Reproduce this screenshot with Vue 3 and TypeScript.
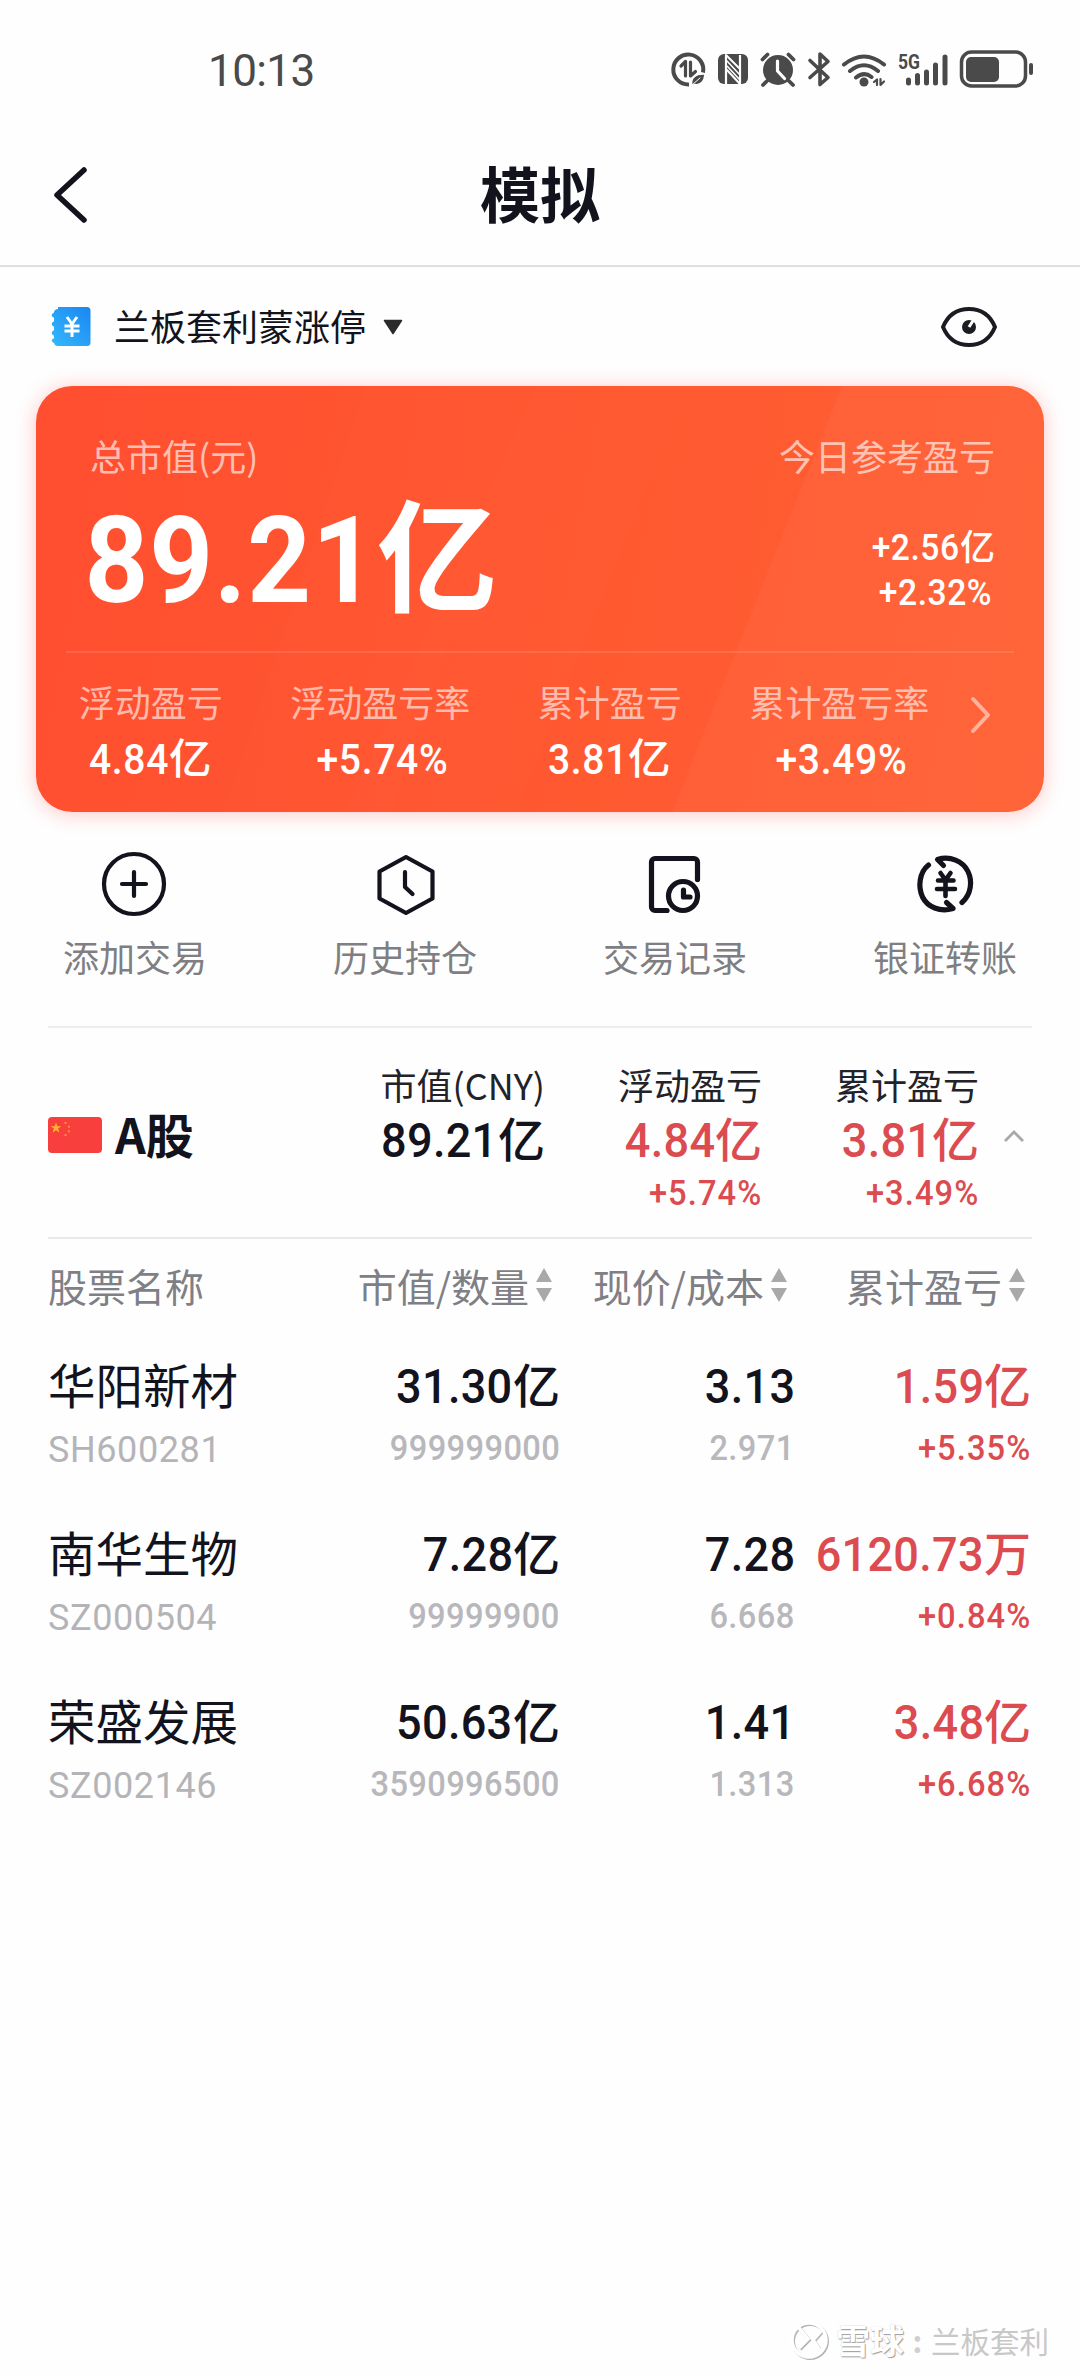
<script setup lang="ts">
import { h } from 'vue'

interface Stat { label: string; value: string }
interface Market { label: string; value: string; pct?: string; up?: boolean }
interface Holding {
  name: string
  code: string
  value: string
  qty: string
  price: string
  cost: string
  profit: string
  pct: string
}

// A figure: condensed digits followed by an optional unit character (亿 / 万).
const Figure = (props: { v: string }) => {
  const unit = props.v.replace(/[\d.+%-]/g, '')
  const digits = props.v.slice(0, props.v.length - unit.length)
  return h('span', { class: 'figure' }, [
    h('span', { class: 'figure-digits' }, digits),
    unit ? h('span', { class: 'figure-unit' }, unit) : null,
  ])
}
Figure.props = ['v']

const stats: Stat[] = [
  { label: '浮动盈亏', value: '4.84亿' },
  { label: '浮动盈亏率', value: '+5.74%' },
  { label: '累计盈亏', value: '3.81亿' },
  { label: '累计盈亏率', value: '+3.49%' },
]

const market: Market[] = [
  { label: '市值(CNY)', value: '89.21亿' },
  { label: '浮动盈亏', value: '4.84亿', pct: '+5.74%', up: true },
  { label: '累计盈亏', value: '3.81亿', pct: '+3.49%', up: true },
]

const columns: string[] = ['市值/数量', '现价/成本', '累计盈亏']

const holdings: Holding[] = [
  { name: '华阳新材', code: 'SH600281', value: '31.30亿', qty: '999999000', price: '3.13', cost: '2.971', profit: '1.59亿', pct: '+5.35%' },
  { name: '南华生物', code: 'SZ000504', value: '7.28亿', qty: '99999900', price: '7.28', cost: '6.668', profit: '6120.73万', pct: '+0.84%' },
  { name: '荣盛发展', code: 'SZ002146', value: '50.63亿', qty: '3590996500', price: '1.41', cost: '1.313', profit: '3.48亿', pct: '+6.68%' },
]
</script>

<template>
  <div class="page">
    <div class="status">
      <span class="time">10:13</span>
      <svg class="status-icons" width="370" height="44" viewBox="0 0 370 44" fill="none" stroke="#4a4a4a" stroke-linecap="round" stroke-linejoin="round">
        <!-- data saver -->
        <path d="M19 37.500A15 15 0 1 1 33 25.500" stroke-width="4" stroke-linecap="butt" />
        <path d="M11 19l4.500-4.500V29M20.500 15v14l5-4.500" stroke-width="3.200" />
        <path d="M22 38.500c-2-8 4-12 13-11.500-.5 7-4 11.500-10 10.500z" fill="#4a4a4a" stroke="#fff" stroke-width="1.500" />
        <path d="M22 38l8-7" stroke="#fff" stroke-width="1" />
        <!-- nfc -->
        <rect x="48" y="7" width="30" height="30" rx="6" fill="#4a4a4a" stroke="none" />
        <path d="M56 8v29M70 8v29" stroke="#fff" stroke-width="2.200" stroke-linecap="butt" />
        <path d="M56 8l14 14v15L56 22z" fill="#4a4a4a" stroke="#fff" stroke-width="2" />
        <path d="M57 14l13 14M57 19l13 14" stroke="#fff" stroke-width="1.600" />
        <!-- alarm -->
        <circle cx="108" cy="23" r="15" fill="#4a4a4a" stroke="none" />
        <path d="M92.500 12.500l5-5M123.500 12.500l-5-5M97 34l-4 4M119 34l4 4" stroke-width="3.800" />
        <path d="M107.500 14v10l7 7.500" stroke="#fff" stroke-width="3.200" />
        <!-- bluetooth -->
        <path d="M140 13.500l18 17-8 7V7l8 7.500-18 16" stroke-width="3.600" />
        <!-- wifi -->
        <path d="M174 17.500q20-16 40 0M180 24q14-11.500 28 0M186 30.500q8-6.500 15.500-.5" stroke-width="4" />
        <circle cx="194" cy="35" r="4.500" fill="#4a4a4a" stroke="none" />
        <path d="M204 35l3-2.500V38M210.500 32v6l3.500-3.500" stroke-width="2.200" />
        <!-- signal -->
        <path d="M238.500 33v3M247.500 28.500v7.500M256.500 25v11M265.500 18v18M275 10v26" stroke-width="5" />
        <text x="228" y="21.500" class="net" textLength="22" lengthAdjust="spacingAndGlyphs">5G</text>
        <!-- battery -->
        <rect x="291.500" y="5" width="64" height="34" rx="10" stroke-width="3.500" />
        <rect x="296" y="10" width="33" height="25" rx="5" fill="#4a4a4a" stroke="none" />
        <path d="M361 18v8" stroke-width="4" />
      </svg>
    </div>

    <header class="nav">
      <svg class="back" width="40" height="60" viewBox="0 0 40 60" fill="none" stroke="#12131c" stroke-width="5.500" stroke-linecap="round" stroke-linejoin="round">
        <path d="M34 5L7 30l27 25" />
      </svg>
      <h1>模拟</h1>
    </header>

    <div class="account">
      <svg width="40" height="42" viewBox="0 0 40 42">
        <defs>
          <linearGradient id="book" x1="0" y1="1" x2="1" y2="0">
            <stop offset="0" stop-color="#35b8fb" />
            <stop offset="1" stop-color="#1a86f2" />
          </linearGradient>
        </defs>
        <path d="M7 1h29a3.500 3.500 0 0 1 3.500 3.500v32A3.500 3.500 0 0 1 36 40H7a4 4 0 0 1-4-3c-3-1.500-3-4 0-4.500v-3c-3-.5-3-4.500 0-5v-4c-3-.5-3-4.500 0-5v-4c-3-.5-3-3.500 0-5 0-2 1.800-3.500 4-3.500z" fill="url(#book)" />
        <path d="M16 11l5 7 5-7M21 18v13M13.500 20h15M13.500 25h15" fill="none" stroke="#fff" stroke-width="3" />
      </svg>
      <span class="account-name">兰板套利蒙涨停</span>
      <svg class="caret" width="20" height="16" viewBox="0 0 20 16"><path d="M1.500 1.500h17L10 14.500z" fill="#2b2b2b" stroke="#2b2b2b" stroke-width="1.500" stroke-linejoin="round" /></svg>
      <svg class="eye" width="58" height="42" viewBox="0 0 58 42" fill="none">
        <path d="M3 21C8 9 17 3 29 3s21 6 26 18c-5 12-14 18-26 18S8 33 3 21z" stroke="#1b1c22" stroke-width="4" stroke-linejoin="round" />
        <circle cx="29" cy="21" r="7" fill="#1b1c22" />
        <path d="M29 21l4.500-7" stroke="#fff" stroke-width="3" />
      </svg>
    </div>

    <section class="card">
      <svg class="bands" viewBox="0 0 1008 426" preserveAspectRatio="none">
        <path d="M330 0h170L356 426H186z" fill="#fff" opacity=".008" />
        <path d="M500 0h150L480 426H310z" fill="#fff" opacity=".012" />
        <path d="M806 0h202v426H636z" fill="#fff" opacity=".03" />
      </svg>
      <div class="card-top">
        <div class="total">
          <div class="card-label">总市值(元)</div>
          <div class="total-value"><Figure v="89.21亿" /></div>
        </div>
        <div class="today">
          <div class="card-label">今日参考盈亏</div>
          <div class="today-value"><Figure v="+2.56亿" /></div>
          <div class="today-pct"><Figure v="+2.32%" /></div>
        </div>
      </div>
      <div class="card-bottom">
        <div v-for="s in stats" :key="s.label" class="stat">
          <div class="stat-label">{{ s.label }}</div>
          <div class="stat-value"><Figure :v="s.value" /></div>
        </div>
        <svg class="more" width="24" height="40" viewBox="0 0 24 40" fill="none" stroke="#fff" stroke-opacity=".5" stroke-width="4" stroke-linecap="round" stroke-linejoin="round">
          <path d="M4 4l15 16L4 36" />
        </svg>
      </div>
    </section>

    <nav class="actions">
      <div class="action">
        <svg width="68" height="68" viewBox="0 0 68 68" fill="none" stroke="#12131c" stroke-width="4.200" stroke-linecap="round">
          <circle cx="33" cy="34" r="30" />
          <path d="M33 22v24M21 34h24" />
        </svg>
        <span>添加交易</span>
      </div>
      <div class="action">
        <svg width="68" height="68" viewBox="0 0 68 68" fill="none" stroke="#12131c" stroke-width="4.200" stroke-linecap="round" stroke-linejoin="round">
          <path d="M35 7l26.500 14.500v27L35 63 8.500 48.500v-27z" />
          <path d="M34 22v15l7.500 7" />
        </svg>
        <span>历史持仓</span>
      </div>
      <div class="action">
        <svg width="68" height="68" viewBox="0 0 68 68" fill="none" stroke="#12131c" stroke-width="5.200" stroke-linecap="round" stroke-linejoin="round">
          <path d="M26 60.500H14a3.500 3.500 0 0 1-3.500-3.500V12A3.500 3.500 0 0 1 14 8.500h39a3.500 3.500 0 0 1 3.500 3.500v17.500" />
          <circle cx="42" cy="46" r="14.500" />
          <path d="M42.500 40v7h6.500" />
        </svg>
        <span>交易记录</span>
      </div>
      <div class="action">
        <svg width="68" height="68" viewBox="0 0 68 68" fill="none" stroke="#12131c" stroke-width="5.200" stroke-linecap="round" stroke-linejoin="round">
          <path d="M32.500 15.500L26.500 9.500C39 5.500 52 11 57 21.500c4.500 9.500 3.500 22.500-6 31" />
          <path d="M35.500 52.500l6.500 6C29 62.500 16.500 57 11.500 47 7 37 8 22.500 17.500 15" />
          <path d="M29.500 23l5 7 5-7M34.500 30v16M27 30.500h15.500M26 39h18" stroke-width="4.600" />
        </svg>
        <span>银证转账</span>
      </div>
    </nav>

    <section class="market">
      <svg class="flag" width="54" height="36" viewBox="0 0 54 36">
        <rect width="54" height="36" rx="4" fill="#f93e3e" />
        <path d="M8 5.500l1.300 3.800h4L10.100 11.600l1.200 3.900L8 13.200l-3.300 2.300 1.200-3.900L2.700 9.300h4z" fill="#ffb52e" />
        <path d="M16.500 5.500l2 .8M20 9.500l2 .3M20 14.500l1.800-.3M16.500 18.500l2-.8" stroke="#ff9a35" stroke-width="1.800" />
      </svg>
      <span class="market-name">A股</span>
      <div v-for="(m, i) in market" :key="i" class="market-col" :class="{ first: i === 0 }">
        <div class="market-label">{{ m.label }}</div>
        <div class="big" :class="{ up: m.up }"><Figure :v="m.value" /></div>
        <div v-if="m.pct" class="small" :class="{ up: m.up }"><Figure :v="m.pct" /></div>
      </div>
      <svg class="fold" width="24" height="14" viewBox="0 0 24 14" fill="none" stroke="#a9a9ad" stroke-width="2.800"><path d="M3 12l9-9 9 9" /></svg>
    </section>

    <section class="table">
      <div class="row head">
        <div>股票名称</div>
        <div v-for="c in columns" :key="c" class="sortable">
          <span>{{ c }}</span>
          <svg width="16" height="34" viewBox="0 0 16 34" fill="#a9a9a9"><path d="M0 14L8 0l8 14zM0 20h16L8 34z" /></svg>
        </div>
      </div>
      <div v-for="s in holdings" :key="s.code" class="row item">
        <div>
          <div class="name">{{ s.name }}</div>
          <div class="code">{{ s.code }}</div>
        </div>
        <div class="num">
          <div class="big"><Figure :v="s.value" /></div>
          <div class="small"><Figure :v="s.qty" /></div>
        </div>
        <div class="num">
          <div class="big"><Figure :v="s.price" /></div>
          <div class="small"><Figure :v="s.cost" /></div>
        </div>
        <div class="num">
          <div class="big up"><Figure :v="s.profit" /></div>
          <div class="small up"><Figure :v="s.pct" /></div>
        </div>
      </div>
    </section>

    <footer class="mark">
      <svg width="42" height="42" viewBox="0 0 42 42" fill="none">
        <g stroke="#b4b4b4" stroke-width="3.500" transform="translate(1.200 1.200)">
          <circle cx="20" cy="20" r="17" />
          <path d="M10 8l9 11-9 9M32 11l-8 9 8 12" />
        </g>
        <g stroke="#fff" stroke-width="3.500">
          <circle cx="20" cy="20" r="17" />
          <path d="M10 8l9 11-9 9M32 11l-8 9 8 12" />
        </g>
      </svg>
      <span class="brand">雪球</span><span class="colon">:</span><span class="user">兰板套利</span>
    </footer>
  </div>
</template>

<style>
body {
  background: #fff;
}
.figure {
  white-space: nowrap;
}
.figure-digits {
  display: inline-block;
  transform: scaleX(0.92);
  transform-origin: 100% 50%;
}
.figure-unit {
  letter-spacing: 0;
}
.big .figure-unit,
.today-value .figure-unit {
  font-size: 0.96em;
}
</style>

<style scoped>
.page {
  width: 1080px;
  height: 2376px;
  box-sizing: border-box;
  overflow: hidden;
  display: flex;
  flex-direction: column;
  background: #fefefe;
  color: #12131c;
  font-family: 'Noto Sans CJK SC', sans-serif;
}
svg {
  display: block;
  flex: none;
}
.status {
  height: 138px;
  box-sizing: border-box;
  padding: 47px 40px 0 208px;
  display: flex;
  justify-content: space-between;
  align-items: flex-start;
}
.time {
  font: 400 44px/44px Roboto, sans-serif;
  letter-spacing: -0.600px;
  margin-top: 2px;
  color: #4a4a4a;
}
.net {
  font: 700 21px Roboto, sans-serif;
  fill: #4a4a4a;
  stroke: none;
}
.nav {
  height: 129px;
  box-sizing: border-box;
  border-bottom: 2px solid #dfdfe1;
  display: grid;
  grid-template-columns: 100px 1fr 100px;
  align-items: center;
  padding: 0 0 14px;
}
.back {
  margin-left: 50px;
}
h1 {
  margin: 0;
  padding-bottom: 6px;
  text-align: center;
  font-size: 60px;
  line-height: 80px;
  font-weight: 700;
}
.account {
  height: 119px;
  box-sizing: border-box;
  padding: 0 82px 0 51px;
  display: flex;
  align-items: center;
}
.account-name {
  margin-left: 23px;
  font-size: 36px;
  line-height: 40px;
  padding-bottom: 3px;
}
.caret {
  margin-left: 17px;
}
.eye {
  margin-left: auto;
}
.card {
  position: relative;
  height: 426px;
  margin: 0 36px;
  border-radius: 36px;
  color: #fff;
  background: linear-gradient(100deg, #ff4e30 0%, #ff5830 50%, #ff6034 100%);
  box-shadow: 0 2px 20px rgba(255, 70, 60, 0.3);
}
.bands {
  position: absolute;
  inset: 0;
  width: 100%;
  height: 100%;
  border-radius: 36px;
}
.card-top {
  position: relative;
  height: 267px;
  box-sizing: border-box;
  margin: 0 30px;
  border-bottom: 2px solid rgba(255, 255, 255, 0.12);
  padding: 46px 19px 0 24px;
  display: flex;
  justify-content: space-between;
}
.card-label {
  font-size: 36px;
  line-height: 46px;
  color: rgba(255, 255, 255, 0.64);
}
.total-value {
  font: 700 121px/130px Roboto, 'Noto Sans CJK SC', sans-serif;
  letter-spacing: 1px;
  margin-left: -31px;
  margin-top: 18px;
}
.today {
  text-align: right;
}
.today-value,
.today-pct {
  font: 500 36.500px/45px Roboto, 'Noto Sans CJK SC', sans-serif;
  letter-spacing: 0.600px;
}
.today-value {
  margin-top: 47px;
}
.today-pct {
  padding-right: 3px;
  margin-top: -1px;
}
.card-bottom {
  position: relative;
  display: flex;
  padding-top: 25px;
}
.stat {
  width: 229.500px;
  text-align: center;
}
.stat-label {
  font-size: 36px;
  line-height: 46px;
  color: rgba(255, 255, 255, 0.6);
}
.stat-value {
  font: 500 42.500px/50px Roboto, 'Noto Sans CJK SC', sans-serif;
  letter-spacing: 0.700px;
  margin-top: 11px;
  padding-right: 8px;
}
.more {
  margin: 17px 0 0 15px;
}
.actions {
  display: grid;
  grid-template-columns: repeat(4, 1fr);
  padding-top: 38px;
  height: 214px;
  box-sizing: border-box;
}
.action {
  display: flex;
  flex-direction: column;
  align-items: center;
  gap: 15px;
  font-size: 36px;
  line-height: 46px;
  color: #7f7f83;
}
.market {
  height: 213px;
  box-sizing: border-box;
  margin: 0 48px;
  border-top: 2px solid #ededee;
  border-bottom: 2px solid #e9e9ea;
  display: flex;
  align-items: flex-start;
  padding-top: 33px;
}
.flag {
  margin-top: 56px;
}
.market-name {
  margin: 47px 0 0 13px;
  font-size: 48px;
  line-height: 50px;
  font-weight: 700;
  width: 113px;
}
.market-col {
  flex: none;
  width: 217px;
  text-align: right;
}
.market-col.first {
  width: 317px;
}
.market-label {
  font-size: 36px;
  line-height: 46px;
  color: #222228;
}
.fold {
  margin: 68px 0 0 23px;
}
.big {
  font: 500 49px/56px Roboto, 'Noto Sans CJK SC', sans-serif;
  letter-spacing: 0.300px;
}
.small {
  font: 500 35.500px/44px Roboto, 'Noto Sans CJK SC', sans-serif;
  letter-spacing: 0.400px;
}
.small.up {
  letter-spacing: 1.200px;
}
.market-col .big {
  margin-top: 6px;
}
.market-col .small {
  margin-top: 2px;
}
.table {
  margin: 0 49px 0 48px;
}
.row {
  display: grid;
  grid-template-columns: 277px 235px 235px 236px;
}
.head {
  height: 99px;
  align-items: center;
  font-size: 39px;
  line-height: 50px;
  color: #7f7f86;
  padding-bottom: 7px;
  box-sizing: border-box;
}
.sortable {
  display: flex;
  justify-content: flex-end;
  align-items: center;
  gap: 7px;
  padding-right: 8px;
}
.sortable:last-child {
  padding-right: 6px;
}
.item {
  height: 168px;
  box-sizing: border-box;
  padding-top: 20px;
}
.name {
  font-size: 47.500px;
  line-height: 56px;
  margin-top: -2px;
}
.code {
  font: 400 36px/44px Roboto, sans-serif;
  letter-spacing: 0.600px;
  color: #b4b4b8;
  margin-top: 16px;
}
.num {
  text-align: right;
  white-space: nowrap;
}
.num .big {
  margin-top: 1px;
}
.num .small {
  color: #b8b8bc;
  margin-top: 11px;
}
.big.up,
.num .small.up,
.small.up {
  color: #dc4b50;
}
.mark {
  margin-top: auto;
  height: 70px;
  box-sizing: border-box;
  padding: 14px 31px 0 0;
  display: flex;
  justify-content: flex-end;
  align-items: flex-start;
  line-height: 40px;
}
.brand {
  margin-left: 5px;
  font-size: 34px;
  font-weight: 700;
  color: #fff;
  text-shadow: 1px 1px 1px #9c9c9c, 0 0 1px #c8c8c8;
}
.colon {
  width: 27px;
  text-align: center;
  font-size: 30px;
  font-weight: 700;
  color: #d0d0d0;
}
.user {
  font-size: 29.500px;
  font-weight: 400;
  color: #c8c8c8;
}
</style>
